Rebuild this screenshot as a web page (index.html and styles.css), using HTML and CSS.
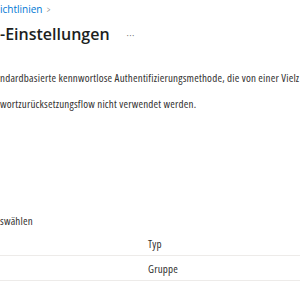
FILE: index.html
```html
<!DOCTYPE html>
<html lang="de">
<head>
<meta charset="utf-8">
<link rel="stylesheet" href="styles.css">
</head>
<body>
<div class="page">
  <nav class="crumb"><span class="crumb-link">ichtlinien</span><span class="chev">&gt;</span></nav>
  <header class="head">
    <h1 class="title">-Einstellungen</h1>
    <span class="more">···</span>
  </header>
  <p class="desc first">ndardbasierte kennwortlose Authentifizierungsmethode, die von einer Vielz</p>
  <p class="desc">wortzurücksetzungsflow nicht verwendet werden.</p>
  <div class="select">swählen</div>
  <div class="table">
    <div class="row"><span class="c1"></span><span class="c2">Typ</span></div>
    <div class="row"><span class="c1"></span><span class="c2">Gruppe</span></div>
  </div>
</div>
</body>
</html>
```

FILE: styles.css
```css
html, body { margin: 0; padding: 0; background: #fff; }
body { font-family: "Open Sans", "Noto Sans", sans-serif; color: #323130; overflow: hidden; }
.page { width: 300px; height: 300px; overflow: hidden; white-space: nowrap; }
.crumb { display: flex; align-items: center; gap: 4px; height: 16px; margin-top: 1px; font-size: 10px; }
.crumb-link { color: #0078d4; }
.chev { color: #8a8886; font-size: 9px; transform: scaleX(0.7); }
.head { display: flex; align-items: center; margin-top: 3px; height: 28px; }
.title { margin: 0; font-size: 16px; font-weight: 600; color: #201f1e; }
.more { margin-left: 17px; color: #605e5c; font-size: 9px; letter-spacing: 0.3px; margin-top: 3px; }
.desc, .select, .table { font-size: 11px; font-stretch: 84%; letter-spacing: 0.2px; }
.desc { margin: 0; line-height: 26px; }
.desc.first { margin-top: 17px; }
.select { margin-top: 96px; line-height: 16px; }
.table { margin-top: 2px; }
.row { display: flex; height: 24px; align-items: center; border-bottom: 1px solid #edebe9; }
.c1 { width: 148px; }
```
